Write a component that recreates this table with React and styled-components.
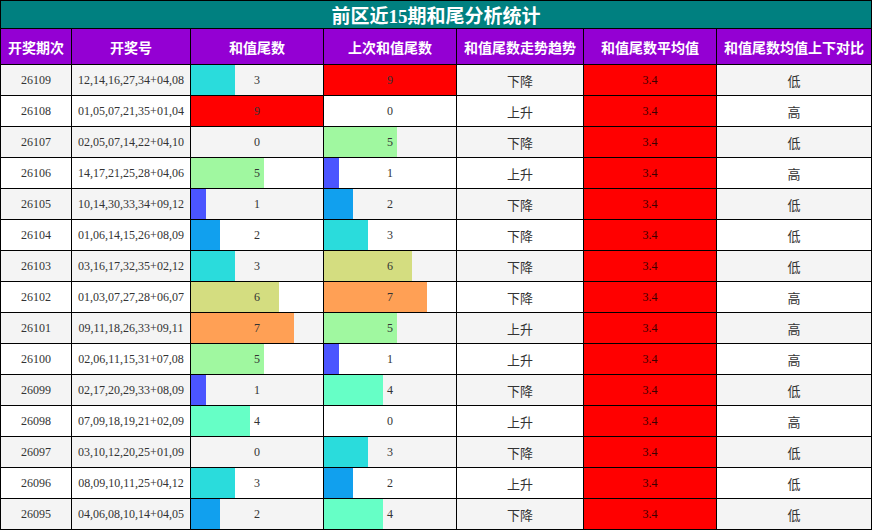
import React from "react";
import styled, { createGlobalStyle } from "styled-components";

const Global = createGlobalStyle`
  html, body { margin: 0; padding: 0; background: #fff; }
`;

const Table = styled.div`
  display: grid;
  grid-template-columns: 70px 118px 132px 132px 126px 132px 154px;
  grid-auto-rows: 30px;
  grid-template-rows: 27px 35px;
  gap: 1px;
  padding: 1px;
  background: #000;
  width: 872px;
  box-sizing: border-box;
`;

const Title = styled.div`
  grid-column: 1 / -1;
  background: #008080;
  color: #fff;
  font-family: "Liberation Serif", "Noto Sans CJK SC", serif;
  font-weight: bold;
  font-size: 19px;
  display: flex;
  align-items: center;
  justify-content: center;
`;

const Head = styled.div`
  background: #9400d3;
  color: #fff;
  font-family: "Noto Sans CJK SC", sans-serif;
  font-weight: bold;
  font-size: 14px;
  display: flex;
  align-items: center;
  justify-content: center;
  white-space: nowrap;
`;

const Cell = styled.div`
  background: ${(p) => (p.$alt ? "#f4f4f4" : "#ffffff")};
  color: #333;
  font-family: ${(p) =>
    p.$cjk ? `"Noto Sans CJK SC", sans-serif` : `"Liberation Serif", serif`};
  font-size: ${(p) => (p.$cjk ? "13px" : "12px")};
  display: flex;
  align-items: center;
  justify-content: center;
  white-space: nowrap;
`;

const BAR_COLORS = {
  1: "#4b55ff",
  2: "#11a0ee",
  3: "#2adcdc",
  4: "#66ffc6",
  5: "#a0f8a0",
  6: "#d4dd80",
  7: "#ffa055",
  8: "#ff6060",
  9: "#ff0000",
};

const BarCell = styled(Cell)`
  background: ${(p) => {
    const base = p.$alt ? "#f4f4f4" : "#ffffff";
    if (!p.$v) return base;
    const w = (p.$v / 9) * 100;
    return `linear-gradient(to right, ${BAR_COLORS[p.$v]} 0 ${w}%, ${base} ${w}% 100%)`;
  }};
`;

const AvgCell = styled(Cell)`
  background: #ff0000;
  color: #3a0000;
`;

const headers = [
  "开奖期次",
  "开奖号",
  "和值尾数",
  "上次和值尾数",
  "和值尾数走势趋势",
  "和值尾数平均值",
  "和值尾数均值上下对比",
];

const rows = [
  ["26109", "12,14,16,27,34+04,08", 3, 9, "下降", "低"],
  ["26108", "01,05,07,21,35+01,04", 9, 0, "上升", "高"],
  ["26107", "02,05,07,14,22+04,10", 0, 5, "下降", "低"],
  ["26106", "14,17,21,25,28+04,06", 5, 1, "上升", "高"],
  ["26105", "10,14,30,33,34+09,12", 1, 2, "下降", "低"],
  ["26104", "01,06,14,15,26+08,09", 2, 3, "下降", "低"],
  ["26103", "03,16,17,32,35+02,12", 3, 6, "下降", "低"],
  ["26102", "01,03,07,27,28+06,07", 6, 7, "下降", "高"],
  ["26101", "09,11,18,26,33+09,11", 7, 5, "上升", "高"],
  ["26100", "02,06,11,15,31+07,08", 5, 1, "上升", "高"],
  ["26099", "02,17,20,29,33+08,09", 1, 4, "下降", "低"],
  ["26098", "07,09,18,19,21+02,09", 4, 0, "上升", "高"],
  ["26097", "03,10,12,20,25+01,09", 0, 3, "下降", "低"],
  ["26096", "08,09,10,11,25+04,12", 3, 2, "上升", "低"],
  ["26095", "04,06,08,10,14+04,05", 2, 4, "下降", "低"],
];

export default function App() {
  return (
    <>
      <Global />
      <Table>
        <Title>前区近15期和尾分析统计</Title>
        {headers.map((h) => (
          <Head key={h}>{h}</Head>
        ))}
        {rows.map(([issue, nums, v, prev, trend, cmp], i) => {
          const alt = i % 2 === 0;
          return (
            <React.Fragment key={issue}>
              <Cell $alt={alt}>{issue}</Cell>
              <Cell $alt={alt}>{nums}</Cell>
              <BarCell $alt={alt} $v={v}>{v}</BarCell>
              <BarCell $alt={alt} $v={prev}>{prev}</BarCell>
              <Cell $alt={alt} $cjk>{trend}</Cell>
              <AvgCell>3.4</AvgCell>
              <Cell $alt={alt} $cjk>{cmp}</Cell>
            </React.Fragment>
          );
        })}
      </Table>
    </>
  );
}
